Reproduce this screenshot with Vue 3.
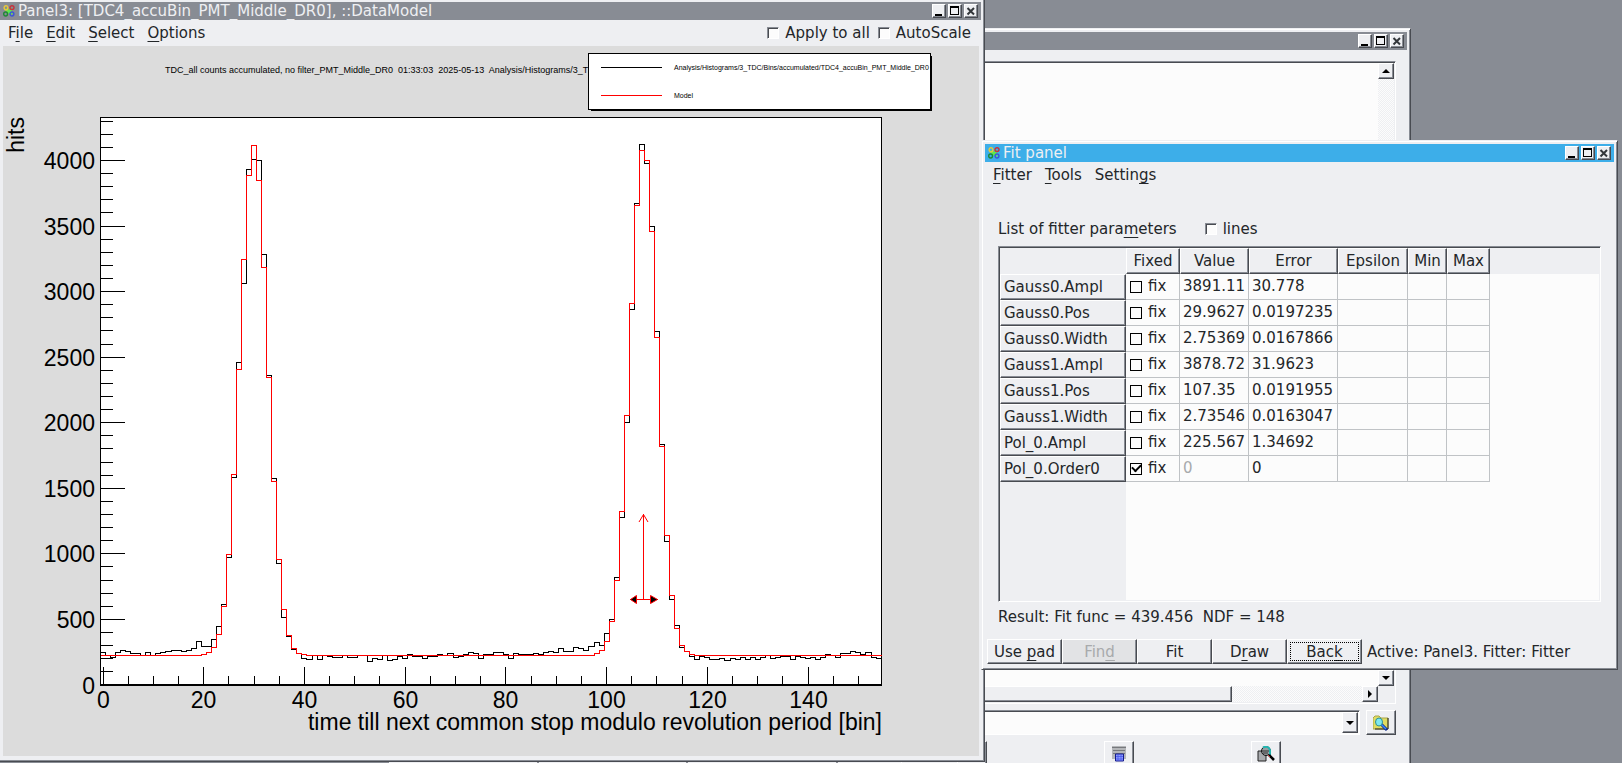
<script setup>
import { h } from 'vue'

// Renders a caption in which "&" marks the mnemonic letter.
const Caption = ({ text }) => {
  const at = text.indexOf('&')
  return at < 0
    ? h('span', text)
    : h('span', [text.slice(0, at), h('u', text[at + 1]), text.slice(at + 2)])
}
Caption.props = ['text']

const TitleIcon = () =>
  h('svg', { width: 12, height: 12, viewBox: '0 0 12 12', fill: 'none', 'stroke-width': 1.4, 'aria-hidden': 'true' }, [
    h('path', { d: 'M3 4L9 9M9 4L4 8', stroke: '#5bea4c', 'stroke-width': 2.4 }),
    h('ellipse', { cx: 3, cy: 2.8, rx: 1.9, ry: 2.1, stroke: '#e8c93a' }),
    h('ellipse', { cx: 9, cy: 2.6, rx: 2, ry: 1.9, stroke: '#c8323c' }),
    h('ellipse', { cx: 2.6, cy: 9, rx: 1.9, ry: 2, stroke: '#1e8a34' }),
    h('ellipse', { cx: 9, cy: 9, rx: 1.9, ry: 2, stroke: '#3d56d6' }),
  ])

const WindowButtons = () =>
  h('div', { class: 'win-buttons' }, [
    h('button', { type: 'button', 'aria-label': 'Minimize' }, [
      h('svg', { width: 10, height: 10, viewBox: '0 0 10 10' }, [h('path', { d: 'M1 8H8V10H1Z', fill: '#000' })]),
    ]),
    h('button', { type: 'button', 'aria-label': 'Maximize' }, [
      h('svg', { width: 10, height: 10, viewBox: '0 0 10 10', 'shape-rendering': 'crispEdges' }, [
        h('path', { d: 'M0 0H9V9H0ZM1 2V8H8V2Z', fill: '#000', 'fill-rule': 'evenodd' }),
      ]),
    ]),
    h('button', { type: 'button', 'aria-label': 'Close' }, [
      h('svg', { width: 10, height: 10, viewBox: '0 0 10 10' }, [
        h('path', { d: 'M1.5 2L8 8.5M8 2L1.5 8.5', stroke: '#33373b', 'stroke-width': 2 }),
      ]),
    ]),
  ])

const panelMenus = ['F&ile', '&Edit', '&Select', '&Options']
const fitMenus = ['&Fitter', '&Tools', 'Settin&gs']

const columns = ['Fixed', 'Value', 'Error', 'Epsilon', 'Min', 'Max']
const params = [
  { name: 'Gauss0.Ampl', value: '3891.11', error: '30.778' },
  { name: 'Gauss0.Pos', value: '29.9627', error: '0.0197235' },
  { name: 'Gauss0.Width', value: '2.75369', error: '0.0167866' },
  { name: 'Gauss1.Ampl', value: '3878.72', error: '31.9623' },
  { name: 'Gauss1.Pos', value: '107.35', error: '0.0191955' },
  { name: 'Gauss1.Width', value: '2.73546', error: '0.0163047' },
  { name: 'Pol_0.Ampl', value: '225.567', error: '1.34692' },
  { name: 'Pol_0.Order0', value: '0', error: '0', fixed: true },
]
const actions = [
  { text: 'Use &pad' },
  { text: 'Fin&d', disabled: true },
  { text: 'Fit' },
  { text: 'D&raw' },
  { text: 'Bac&k', focused: true },
]

// Plot geometry, in canvas units.
const X0 = 100.5
const Y0 = 685
const BIN = 5.036
const UNIT = 0.13113
const snap = (v) => Math.floor(v) + 0.5
const xOf = (edge) => snap(X0 + edge * BIN)
const yOf = (v) => snap(Y0 - v * UNIT)

// Top line of each histogram bin.
const tops = [
  652, 655, 657, 652, 650, 651, 653, 653, 655, 652, 655, 653, 652, 651, 650, 650, 651, 650, 648, 641,
  646, 646, 639, 626, 604, 557, 477, 362, 283, 169, 159, 160, 254, 375, 478, 563, 617, 636, 649, 653,
  658, 659, 655, 659, 655, 656, 657, 657, 655, 657, 657, 655, 655, 661, 658, 659, 655, 660, 659, 656,
  658, 654, 656, 656, 658, 656, 656, 654, 655, 653, 657, 656, 654, 652, 653, 658, 654, 654, 652, 652,
  654, 658, 653, 654, 654, 654, 653, 654, 652, 651, 652, 648, 651, 651, 647, 648, 650, 646, 642, 645,
  633, 619, 577, 517, 422, 309, 203, 144, 163, 226, 331, 444, 541, 599, 625, 647, 651, 656, 659, 656,
  657, 659, 659, 658, 660, 658, 659, 657, 659, 657, 659, 657, 655, 658, 657, 656, 656, 659, 656, 657,
  658, 657, 659, 657, 654, 655, 657, 653, 653, 651, 652, 654, 652, 657, 658,
]
const gauss = (x, a, m, s) => a * Math.exp(-((x - m) ** 2) / (2 * s * s))
const model = tops.map((_, i) =>
  yOf(225.567 + gauss(i, 3891.11, 29.9627, 2.75369) + gauss(i, 3878.72, 107.35, 2.73546)),
)
const steps = (ys) => ys.map((y, i) => `${i ? 'V' : `M${xOf(0)} `}${y}H${xOf(i + 1)}`).join('')
const dataPath = steps(tops.map((t) => t + 0.5))
const modelPath = steps(model)

const yTicks = Array.from({ length: 44 }, (_, i) => ({ v: i * 100, y: yOf(i * 100), major: i % 5 === 0 }))
const xTicks = Array.from({ length: 31 }, (_, i) => ({ v: i * 5, x: xOf(i * 5 + 0.5), major: i % 4 === 0 }))
</script>

<template>
  <main class="desktop">
    <div class="strip"><i></i><i></i><i></i><i></i></div>

    <section class="window back" aria-label="Log">
      <header class="title"><WindowButtons /></header>
      <div class="log">
        <div class="log-view">
          <div class="log-text"></div>
          <div class="vbar">
            <button type="button" class="arrow" aria-label="Scroll up"><svg width="8" height="4" viewBox="0 0 8 4"><path d="M0 4L4 0L8 4Z" /></svg></button>
            <button type="button" class="arrow" aria-label="Scroll down"><svg width="8" height="4" viewBox="0 0 8 4"><path d="M0 0L4 4L8 0Z" /></svg></button>
          </div>
          <div class="hbar">
            <div class="thumb"></div>
            <button type="button" class="arrow" aria-label="Scroll right"><svg width="4" height="8" viewBox="0 0 4 8"><path d="M0 0L4 4L0 8Z" /></svg></button>
          </div>
        </div>
        <div class="command">
          <div class="combo">
            <input type="text" aria-label="Command" />
            <button type="button" class="arrow" aria-label="History"><svg width="8" height="4" viewBox="0 0 8 4"><path d="M0 0L4 4L8 0Z" /></svg></button>
          </div>
          <button type="button" class="tool" aria-label="Find file">
            <svg width="16" height="16" viewBox="0 0 16 16">
              <path d="M0 3L2 1H6L8 3H15V14H0Z" fill="#e0dc62" stroke="#a8a548" />
              <path d="M15 3V14H2" fill="none" stroke="#222" />
              <path d="M8 9L14 15" stroke="#102a8c" stroke-width="3" />
              <path d="M8 9L13 14" stroke="#3a8cff" stroke-width="1.5" />
              <ellipse cx="6" cy="7" rx="3.5" ry="4" fill="#7fe9ef" stroke="#2b8f98" />
            </svg>
          </button>
        </div>
        <div class="tools">
          <button type="button" class="tool" aria-label="Home"></button>
          <button type="button" class="tool" aria-label="Save log">
            <svg width="16" height="16" viewBox="0 0 16 16">
              <path d="M1 0H15V13H1Z" fill="#b4b6b9" />
              <path d="M1 1.500H15M2 4.500H14M2 7.500H14" stroke="#77797d" />
              <path d="M4.500 8H12.500V15H4.500Z" fill="#8f9cff" stroke="#141a8c" />
              <path d="M7 8V15M10 8V15M5 10.500H12M5 13H12" stroke="#3f50e8" stroke-width="0.700" />
            </svg>
          </button>
          <button type="button" class="tool" aria-label="Inspect">
            <svg width="18" height="16" viewBox="0 0 18 16">
              <path d="M1 5H9V15H1Z" fill="#a9abae" stroke="#222" />
              <circle cx="9" cy="5" r="4.500" fill="#9a9da0" stroke="#111" />
              <path d="M6 1.500Q11 -1 13 4V9" fill="none" stroke="#22b5b0" stroke-width="2" />
              <path d="M5 5H12M6 7H11" stroke="#333" />
              <path d="M12 9L17 14" stroke="#000" stroke-width="2.500" />
              <path d="M11 9L13 11" stroke="#c33" />
            </svg>
          </button>
        </div>
      </div>
    </section>

    <section class="window panel" aria-label="Panel3">
      <header class="title">
        <TitleIcon />
        <h1>Panel3: [TDC4_accuBin_PMT_Middle_DR0], ::DataModel</h1>
        <WindowButtons />
      </header>
      <nav class="menubar">
        <button v-for="m in panelMenus" :key="m" type="button" class="menu"><Caption :text="m" /></button>
        <span class="spring"></span>
        <label class="check"><input type="checkbox" />Apply to all</label>
        <label class="check"><input type="checkbox" />AutoScale</label>
      </nav>
      <div class="canvas">
        <svg viewBox="3 46 976 710" class="plot" role="img" aria-label="Histogram with fit model">
          <g class="lines">
            <rect x="100.500" y="117.500" width="781" height="567" fill="#fff" stroke="#000" />
            <path d="M100 685H882" stroke="#000" stroke-width="2" />
            <path
              v-for="t in yTicks"
              :key="'y' + t.v"
              :d="`M100 ${t.y}H${t.major ? 125 : 113}`"
              stroke="#000"
            />
            <path
              v-for="t in xTicks"
              :key="'x' + t.v"
              :d="`M${t.x} 685V${t.major ? 667 : 676}`"
              stroke="#000"
            />
            <path :d="dataPath" fill="none" stroke="#000" />
            <path :d="modelPath" fill="none" stroke="#f00" />
          </g>
          <g stroke="#f00" fill="none">
            <path d="M643.500 514V599M630 599.500H658" />
            <path d="M639 522L643.500 514.500L648 522" />
            <path d="M630.500 599.500L636.500 595.500V603.500Z" fill="#000" />
            <path d="M657.500 599.500L650.500 595.500V603.500Z" fill="#000" />
          </g>
          <template v-for="t in yTicks" :key="'ly' + t.v">
            <text v-if="t.major" x="95" :y="t.y + 8" class="axis" text-anchor="end">{{ t.v }}</text>
          </template>
          <template v-for="t in xTicks" :key="'lx' + t.v">
            <text v-if="t.major" :x="t.x" y="708" class="axis" text-anchor="middle">{{ t.v }}</text>
          </template>
          <text x="882" y="730" class="axis" text-anchor="end">time till next common stop modulo revolution period [bin]</text>
          <text transform="translate(24 117) rotate(-90)" class="axis" text-anchor="end">hits</text>
          <text x="165" y="73" class="caption">TDC_all counts accumulated, no filter_PMT_Middle_DR0&nbsp; 01:33:03&nbsp; 2025-05-13&nbsp; Analysis/Histograms/3_T</text>
          <g class="lines">
            <path d="M591 110H931V56" fill="none" stroke="#000" stroke-width="2" />
            <rect x="588.500" y="53.500" width="342" height="56" fill="#fff" stroke="#000" />
            <path d="M601 67.500H662" stroke="#000" />
            <path d="M601 95.500H662" stroke="#f00" />
          </g>
          <text x="674" y="70" class="key">Analysis/Histograms/3_TDC/Bins/accumulated/TDC4_accuBin_PMT_Middle_DR0</text>
          <text x="674" y="98" class="key">Model</text>
        </svg>
      </div>
    </section>

    <section class="window fit" aria-label="Fit panel">
      <header class="title active">
        <TitleIcon />
        <h2>Fit panel</h2>
        <WindowButtons />
      </header>
      <nav class="menubar">
        <button v-for="m in fitMenus" :key="m" type="button" class="menu"><Caption :text="m" /></button>
      </nav>
      <div class="list-row">
        <Caption text="List of fitter para&meters" />
        <label class="check"><input type="checkbox" />lines</label>
      </div>
      <div class="sheet">
        <table>
          <thead>
            <tr>
              <th class="corner"></th>
              <th v-for="c in columns" :key="c" scope="col" :class="['col', c.toLowerCase()]">{{ c }}</th>
              <th class="rest"></th>
            </tr>
          </thead>
          <tbody>
            <tr v-for="p in params" :key="p.name">
              <th scope="row" class="name">{{ p.name }}</th>
              <td class="fix"><label><input type="checkbox" :checked="p.fixed" />fix</label></td>
              <td :class="{ dim: p.fixed }">{{ p.value }}</td>
              <td>{{ p.error }}</td>
              <td></td>
              <td></td>
              <td></td>
            </tr>
          </tbody>
        </table>
        <div class="gutter"></div>
      </div>
      <p class="result">Result: Fit func = 439.456&nbsp; NDF = 148</p>
      <footer class="actions">
        <button
          v-for="a in actions"
          :key="a.text"
          type="button"
          :disabled="a.disabled"
          :class="{ focused: a.focused }"
        ><Caption :text="a.text" /></button>
        <span class="status">Active: Panel3. Fitter: Fitter</span>
      </footer>
    </section>
  </main>
</template>

<style>
html,
body {
  margin: 0;
  overflow: hidden;
}
</style>

<style scoped>
.desktop {
  position: relative;
  height: 100vh;
  overflow: hidden;
  background: #888c94;
  color: #232629;
  font: 15px/20px "DejaVu Sans", Verdana, sans-serif;
}
.desktop * {
  box-sizing: border-box;
}
.desktop button,
.desktop input {
  font: inherit;
  color: inherit;
  margin: 0;
  padding: 0;
}
.desktop :deep(u) {
  text-decoration-thickness: 1px;
  text-underline-offset: 3px;
  text-decoration-skip-ink: none;
}
.strip {
  position: absolute;
  left: 389px;
  right: 637px;
  bottom: 0;
  height: 1px;
  display: flex;
  gap: 2px;
}
.strip i {
  flex: 1;
  background: #eeeff2;
}

/* Windows */
.window {
  position: absolute;
  display: flex;
  flex-direction: column;
  padding: 3px;
  background: #eeeff2;
  border: 1px solid;
  border-color: #eeeff2 #484b51 #484b51 #eeeff2;
  box-shadow: inset 1px 1px #fff, inset -1px -1px #888c94;
}
.panel {
  left: -4px;
  right: 637px;
  top: -2px;
  bottom: 1px;
}
.back {
  left: 900px;
  right: 211px;
  top: 28px;
  bottom: -20px;
}
.fit {
  left: calc(100% - 641px);
  right: 4px;
  top: 140px;
}
.title {
  display: flex;
  align-items: center;
  height: 18px;
  padding: 0 3px;
  background: #888c94;
  color: #eeeff2;
}
.title.active {
  background: #3daee9;
}
.title h1,
.title h2 {
  margin: 0 0 0 3px;
  font-size: 15px;
  font-weight: normal;
  line-height: 18px;
  white-space: nowrap;
}
.title :deep(.win-buttons) {
  display: flex;
  gap: 2px;
  margin-left: auto;
}
.title :deep(.win-buttons button) {
  display: flex;
  width: 14px;
  height: 14px;
  padding: 1px;
  background: #eeeff2;
  border: 1px solid;
  border-color: #fff #484b51 #484b51 #fff;
  box-shadow: inset -1px -1px #888c94;
}
.title :deep(.win-buttons svg) {
  display: block;
}
.menubar {
  display: flex;
  align-items: center;
  height: 26px;
}
.menu {
  padding: 0;
  border: 0;
  background: none;
}
.panel .menubar {
  padding: 0 10px 0 8px;
  gap: 13px;
}
.panel .menubar .check + .check {
  margin-left: -5px;
}
.fit .menubar {
  padding-left: 8px;
  gap: 13px;
}
.spring {
  flex: 1;
}
.check {
  display: flex;
  align-items: center;
  gap: 6px;
}
.check input {
  appearance: none;
  width: 12px;
  height: 12px;
  background: #fcfcfc;
  border: 1px solid;
  border-color: #888c94 #fff #fff #888c94;
  box-shadow: inset 1px 1px #484b51;
}

/* Plot */
.canvas {
  flex: 1;
  min-height: 0;
  margin: 0 2px 2px 3px;
  background: #dcdcdc;
}
.plot {
  display: block;
  width: 100%;
  height: 100%;
}
.lines {
  shape-rendering: crispEdges;
}
.plot text {
  font-family: "Liberation Sans", Arial, sans-serif;
  fill: #000;
}
.plot .axis {
  font-size: 23px;
}
.plot .caption {
  font-size: 9px;
}
.plot .key {
  font-size: 7px;
}

/* Fit panel */
.list-row {
  display: flex;
  align-items: center;
  gap: 28px;
  height: 20px;
  margin: 31px 0 7px 13px;
}
.sheet {
  display: flex;
  flex-direction: column;
  height: 356px;
  margin: 0 13px;
  background: #fcfcfc;
  border: 1px solid;
  border-color: #888c94 #fff #fff #888c94;
  box-shadow: inset 1px 1px #484b51, inset -1px -1px #eeeff2;
  padding: 1px;
}
table {
  width: 100%;
  table-layout: fixed;
  border-collapse: separate;
  border-spacing: 0;
}
th,
td {
  height: 26px;
  padding: 0;
  font-weight: normal;
  line-height: 20px;
  white-space: nowrap;
}
.corner,
.rest {
  background: #eeeff2;
}
.corner {
  width: 126px;
}
.col,
.name {
  background: #eeeff2;
  border: 1px solid;
  border-color: #fff #484b51 #484b51 #fff;
  box-shadow: inset -1px -1px #888c94;
}
.fixed {
  width: 54px;
}
.value {
  width: 69px;
}
.error {
  width: 89px;
}
.epsilon {
  width: 70px;
}
.min {
  width: 39px;
}
.max {
  width: 43px;
}
.name {
  padding-left: 3px;
  text-align: left;
}
td {
  padding: 0 0 2px 3px;
  border-right: 1px solid #c0c3c6;
  border-bottom: 1px solid #c0c3c6;
}
.dim {
  color: #a8aaac;
}
.fix label {
  display: flex;
  align-items: center;
  gap: 6px;
}
.fix input {
  appearance: none;
  display: grid;
  place-items: center;
  width: 12px;
  height: 12px;
  border: 1px solid #000;
}
.desktop .fix input {
  margin: 2px 0 0 1px;
}
.fix input:checked::after {
  content: "";
  width: 7px;
  height: 4px;
  margin-bottom: 3px;
  border: solid #000;
  border-width: 0 0 2px 2px;
  transform: rotate(-45deg);
}
.gutter {
  flex: 1;
  width: 126px;
  background: #eeeff2;
}
.result {
  margin: 5px 13px 12px;
}
.actions {
  display: flex;
  align-items: center;
  padding: 0 0 2px 2px;
}
.actions button {
  width: 75px;
  height: 25px;
  background: #eeeff2;
  border: 1px solid;
  border-color: #fff #484b51 #484b51 #fff;
  box-shadow: inset -1px -1px #888c94;
}
.actions button:disabled {
  background: #e2e3e5;
  color: #a8aaac;
}
.actions .focused {
  outline: 1px dotted #000;
  outline-offset: -4px;
}
.status {
  margin-left: 5px;
}

/* Log window */
.log {
  display: flex;
  flex: 1;
  flex-direction: column;
  padding: 11px 11px 0 0;
}
.log-view {
  display: grid;
  grid-template: 1fr 16px / 1fr 16px;
  height: 643px;
  background: #eeeff2;
  border: 1px solid;
  border-color: #888c94 #fff #fff #888c94;
  box-shadow: inset 1px 1px #484b51;
  padding: 1px;
}
.log-text {
  background: #fcfcfc;
}
.vbar,
.hbar {
  display: flex;
  justify-content: space-between;
  background: repeating-conic-gradient(#fcfcfc 0 25%, #eeeff2 0 50%) 0 0 / 2px 2px;
}
.vbar {
  flex-direction: column;
}
.arrow,
.thumb,
.tool {
  display: grid;
  place-items: center;
  width: 16px;
  height: 16px;
  background: #eeeff2;
  border: 1px solid;
  border-color: #fff #484b51 #484b51 #fff;
  box-shadow: inset -1px -1px #888c94;
}
.thumb {
  width: calc(100% - 146px);
}
.command {
  display: flex;
  justify-content: space-between;
  gap: 6px;
  margin-top: 6px;
}
.combo {
  display: flex;
  flex: 1;
  height: 25px;
  padding: 1px;
  background: #fcfcfc;
  border: 1px solid;
  border-color: #888c94 #fff #fff #888c94;
  box-shadow: inset 1px 1px #484b51;
}
.combo input {
  flex: 1;
  border: 0;
  background: none;
}
.combo .arrow {
  height: 21px;
}
.tool {
  width: 30px;
  height: 25px;
}
.tools {
  display: flex;
  gap: 117px;
  justify-content: flex-end;
  margin: 6px 115px 0 0;
}
</style>
